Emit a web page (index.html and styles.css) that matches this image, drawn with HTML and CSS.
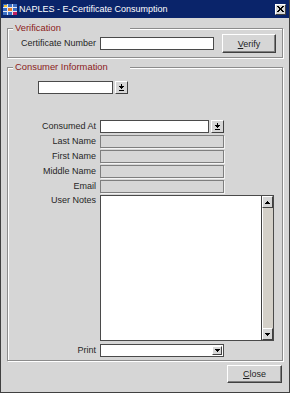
FILE: index.html
```html
<!DOCTYPE html>
<html lang="en">
  <head>
    <meta charset="UTF-8" />
    <meta name="viewport" content="width=device-width, initial-scale=1.0" />
    <title>NAPLES - E-Certificate Consumption</title>
    <link rel="stylesheet" href="styles.css">
  </head>
  <body>
    <div class="window">
      <!-- Title bar -->
      <div class="titlebar">
        <svg class="app-icon" width="14" height="13" viewBox="0 0 14 13" shape-rendering="crispEdges">
          <rect x="0" y="1" width="14" height="11" fill="#3a6fc4" />
          <rect x="0" y="4" width="14" height="1" fill="#e8e8f0" />
          <rect x="0" y="8" width="14" height="1" fill="#e8e8f0" />
          <rect x="4" y="1" width="1" height="11" fill="#e8e8f0" />
          <rect x="9" y="1" width="1" height="11" fill="#e8e8f0" />
          <rect x="5" y="5" width="4" height="3" fill="#e87a20" />
          <rect x="10" y="9" width="4" height="3" fill="#c02060" />
          <rect x="1" y="2" width="3" height="2" fill="#f0c030" />
        </svg>
        <span class="title">NAPLES - E-Certificate Consumption</span>
        <span class="close-x">
          <svg width="7" height="6" viewBox="0 0 7 6" shape-rendering="crispEdges">
            <path d="M0 0h2v1h-2zM5 0h2v1h-2zM1 1h2v1h-2zM4 1h2v1h-2zM2 2h3v2h-3zM1 4h2v1h-2zM4 4h2v1h-2zM0 5h2v1h-2zM5 5h2v1h-2z" fill="#000" />
          </svg>
        </span>
      </div>

      <div class="content">
        <!-- Verification -->
        <fieldset class="group group-verify">
          <legend>Verification</legend>
          <div class="verify-row">
            <label class="label">Certificate Number</label>
            <div class="field field-cert"></div>
            <button class="btn btn-verify"><u>V</u>erify</button>
          </div>
        </fieldset>

        <!-- Consumer Information -->
        <fieldset class="group group-consumer">
          <legend>Consumer Information</legend>
          <div class="lov lov-top">
            <div class="field field-lov-top"></div>
            <span class="lov-btn">
              <svg width="5" height="7" viewBox="0 0 5 7" shape-rendering="crispEdges">
                <path d="M2 0h1v2h-1zM0 2h5v1h-5zM1 3h3v1h-3zM2 4h1v1h-1zM0 6h5v1h-5z" fill="#000" />
              </svg>
            </span>
          </div>

          <div class="form-grid">
            <label class="label">Consumed At</label>
            <div class="lov">
              <div class="field field-lov"></div>
              <span class="lov-btn">
                <svg width="5" height="7" viewBox="0 0 5 7" shape-rendering="crispEdges">
                  <path d="M2 0h1v2h-1zM0 2h5v1h-5zM1 3h3v1h-3zM2 4h1v1h-1zM0 6h5v1h-5z" fill="#000" />
                </svg>
              </span>
            </div>

            <label class="label">Last Name</label>
            <div class="field field-off"></div>

            <label class="label">First Name</label>
            <div class="field field-off"></div>

            <label class="label">Middle Name</label>
            <div class="field field-off"></div>

            <label class="label">Email</label>
            <div class="field field-off"></div>

            <label class="label label-top">User Notes</label>
            <div class="field notes">
              <div class="notes-text"></div>
              <div class="scrollbar">
                <span class="scroll-btn">
                  <svg width="5" height="3" viewBox="0 0 5 3" shape-rendering="crispEdges">
                    <path d="M2 0h1v1h-1zM1 1h3v1h-3zM0 2h5v1h-5z" fill="#000" />
                  </svg>
                </span>
                <span class="scroll-track"></span>
                <span class="scroll-btn">
                  <svg width="5" height="3" viewBox="0 0 5 3" shape-rendering="crispEdges">
                    <path d="M0 0h5v1h-5zM1 1h3v1h-3zM2 2h1v1h-1z" fill="#000" />
                  </svg>
                </span>
              </div>
            </div>

            <label class="label label-print">Print</label>
            <div class="field field-print">
              <span class="combo-btn">
                <svg width="5" height="3" viewBox="0 0 5 3" shape-rendering="crispEdges">
                  <path d="M0 0h5v1h-5zM1 1h3v1h-3zM2 2h1v1h-1z" fill="#000" />
                </svg>
              </span>
            </div>
          </div>
        </fieldset>

        <div class="footer">
          <button class="btn btn-close"><u>C</u>lose</button>
        </div>
      </div>
    </div>
  </body>
</html>
```

FILE: styles.css
```css
* {
  box-sizing: border-box;
}
body {
  margin: 0;
  font-family: "Liberation Sans", Arial, sans-serif;
  font-size: 9px;
  color: #262626;
  background: #d6d6d6;
}
.window {
  width: 290px;
  height: 393px;
  background: #d6d6d6;
  border: 1px solid #404040;
  border-top: none;
  display: flex;
  flex-direction: column;
}
/* Title bar */
.titlebar {
  height: 18px;
  background: #0a246a;
  color: #fff;
  display: flex;
  align-items: center;
  padding: 0 3px 0 2px;
}
.app-icon {
  margin-right: 2px;
}
.title {
  flex: 1;
  font-size: 9px;
}
.close-x {
  width: 11px;
  height: 11px;
  background: #d6d6d6;
  border: 1px solid;
  border-color: #fff #404040 #404040 #fff;
  display: flex;
  align-items: center;
  justify-content: center;
}
.content {
  flex: 1;
  padding: 4px 6px 0;
  display: flex;
  flex-direction: column;
}
/* Group boxes */
.group {
  margin: 0;
  padding: 0 0 4px;
  border: 1px solid #8c8c8c;
  box-shadow: inset 1px 1px 0 #fff, 1px 1px 0 #fff;
}
.group legend {
  width: 117px;
  margin-left: 5px;
  padding: 0 2px;
  font-size: 9.4px;
  line-height: 12px;
  color: #8b1a1a;
  background: #d6d6d6;
}
.group-consumer {
  margin-top: 3px;
}
.label {
  text-align: right;
  line-height: 13px;
  white-space: nowrap;
}
.label-top {
  line-height: 11px;
}
/* Verification row */
.verify-row {
  display: grid;
  grid-template-columns: 88px 114px 58px;
  column-gap: 4px;
  align-items: center;
  height: 19px;
}
.btn-verify {
  width: 54px;
  margin-left: 4px;
}
/* Fields */
.field {
  height: 13px;
  background: #fff;
  border: 1px solid #4a4a4a;
}
.field-off {
  background: #d6d6d6;
  border-color: #7e7e7e;
  box-shadow: 1px 1px 0 #f4f4f4;
}
.lov {
  display: flex;
  gap: 2px;
}
.lov-top {
  margin: 8px 0 0 30px;
}
.field-lov-top {
  width: 75px;
}
.field-lov {
  width: 109px;
}
.lov-btn {
  width: 13px;
  height: 13px;
  background: #d6d6d6;
  border: 1px solid;
  border-color: #fff #404040 #404040 #fff;
  display: flex;
  align-items: center;
  justify-content: center;
}
.form-grid {
  display: grid;
  grid-template-columns: 88px 174px;
  grid-template-rows: repeat(5, 13px) 146px 13px;
  column-gap: 4px;
  row-gap: 2px;
  margin-top: 26px;
}
.form-grid .field-off,
.form-grid .lov,
.field-print {
  width: 124px;
}
/* Notes with scrollbar */
.notes {
  height: 146px;
  display: flex;
}
.notes-text {
  flex: 1;
}
.scrollbar {
  width: 12px;
  display: flex;
  flex-direction: column;
  background: #d4d0c8;
  border-left: 1px solid #404040;
}
.scroll-btn {
  height: 12px;
  background: #d6d6d6;
  border: 1px solid;
  border-color: #fff #404040 #404040 #fff;
  display: flex;
  align-items: center;
  justify-content: center;
}
.scroll-track {
  flex: 1;
  border-left: 1px solid #fff;
}
/* Print combo */
.label-print,
.field-print {
  margin-top: 1px;
}
.field-print {
  display: flex;
  justify-content: flex-end;
  align-items: center;
  padding-right: 1px;
}
.combo-btn {
  width: 10px;
  height: 9px;
  background: #d6d6d6;
  border: 1px solid;
  border-color: #fff #404040 #404040 #fff;
  display: flex;
  align-items: center;
  justify-content: center;
}
/* Buttons */
.btn {
  font-family: "Liberation Sans", Arial, sans-serif;
  font-size: 9px;
  color: #1e1e1e;
  background: #d6d6d6;
  border: 1px solid;
  border-color: #fff #404040 #404040 #fff;
  box-shadow: inset -1px -1px 0 #808080;
  padding: 0;
}
.btn-verify {
  height: 19px;
}
.footer {
  display: flex;
  justify-content: flex-end;
  margin-top: 4px;
  padding-right: 1px;
}
.btn-close {
  width: 55px;
  height: 18px;
}
```
